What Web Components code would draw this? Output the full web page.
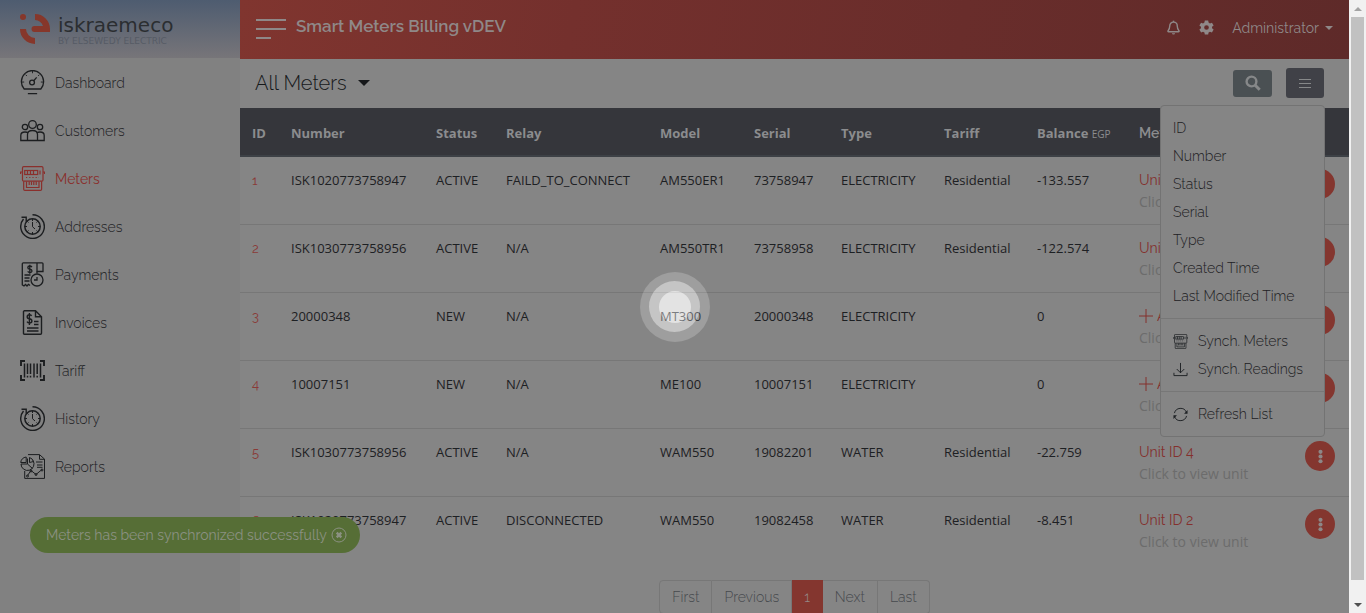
<!DOCTYPE html>
<html lang="en">
<head>
<meta charset="utf-8">
<title>Smart Meters Billing</title>
<style>
  html, body { margin: 0; height: 100%; }
  body {
    --display: Raleway, Lato, sans-serif;
    --data: "Segoe UI", "Open Sans", "Noto Sans", sans-serif;
    --red: #84362f;
    --page: #858585;
    --line: #777777;
    font: 300 14px/22px var(--display);
    color: #1d2023;
    background: var(--page);
    overflow: hidden;
  }
</style>
</head>
<body>
<billing-app>
  <side-nav slot="side">
    <nav-item icon="dashboard">Dashboard</nav-item>
    <nav-item icon="people">Customers</nav-item>
    <nav-item icon="meter" active>Meters</nav-item>
    <nav-item icon="clock">Addresses</nav-item>
    <nav-item icon="payment">Payments</nav-item>
    <nav-item icon="invoice">Invoices</nav-item>
    <nav-item icon="barcode">Tariff</nav-item>
    <nav-item icon="clock">History</nav-item>
    <nav-item icon="report">Reports</nav-item>
  </side-nav>
  <top-bar>Smart Meters Billing vDEV</top-bar>
  <list-toolbar>All Meters</list-toolbar>
  <meters-table></meters-table>
  <page-links></page-links>
  <scroll-track slot="track"></scroll-track>
  <toast-note slot="over">Meters has been synchronized successfully</toast-note>
  <busy-pulse slot="over"></busy-pulse>
</billing-app>

<script>
const ICONS = {
  dashboard: ['0 0 25 27', `<path d="M3.5 20.5a12 12 0 1 1 18 0zM7.5 25.5h10" stroke-width="1.4"/><circle cx="12" cy="13.5" r="2.6" stroke-width="1.4"/><path d="M13.8 11.6 17 8" stroke-width="1.4"/><path d="M12.5 1v2.5M5 5l1.500 1.500M20 5l-1.500 1.500M1 13h2.500M21.500 13H24" />`],
  people: ['0 0 25 25', `<g stroke-width="1.300"><circle cx="12.500" cy="6.500" r="3.800"/><circle cx="5" cy="9" r="2.700"/><circle cx="20" cy="9" r="2.700"/><path d="M7.500 22.500v-6q0-4 5-4t5 4v6zM7.500 22.500H.800v-5q0-3.500 4.200-3.500 2 0 3 .800M17.500 22.500h6.700v-5q0-3.500-4.200-3.500-2 0-3 .800"/></g>`],
  meter: ['0 0 25 25', `<g stroke-width="1.200"><rect x="2.500" y=".700" width="20.500" height="14.500" rx="1.200"/><path d="M2.500 6H.600v2M23 6h1.500v2M3.700 15.200v8q0 1.200 1.200 1.200h15.500q1.200 0 1.200-1.200v-8"/><rect x="4.700" y="4.500" width="13" height="4"/><path d="M7.500 4.500v4M10.500 4.500v4M13.500 4.500v4M20 4.500v4M6.500 15.500v6h12.500v-6M9.200 15.500v3.500M11.500 15.500v3.500M13.800 15.500v3.500M16.200 15.500v3.500"/><path d="M6 11.500h13" stroke-dasharray="1.200 2"/></g>`],
  clock: ['0 0 25 25', `<path d="M12.500.800A11.800 11.800 0 1 1 3.500 5" stroke-width="1.400"/><path d="M1.500 3.200h4.700v4.600" stroke-width="1.400"/><circle cx="12.500" cy="12.500" r="7.700" stroke-width="1.500"/><path d="M12.500 8v4.700l2.500 2.300M12.500 5v2M12.500 18v2M5 12.500h2M18 12.500h2M7.200 7.200l1.300 1.300M17.800 7.200l-1.300 1.300M7.200 17.800l1.300-1.300M17.800 17.800l-1.300-1.300"/>`],
  payment: ['0 0 25 25', `<g stroke-width="1.300"><path d="M10 23.500l-1.500-1.200L7 24l-1.500-1.500L4 24l-1.700-1.200V1.800q0-1 1-1H22q1 0 1 1V9.500h-6V1"/><path d="M17 9.500v2"/><circle cx="17" cy="18" r="6"/><path d="M17 15v3h-3M4.500 13h6M4.500 16h5M4.500 19h5"/><path d="M12 5q-1-1-2.200-1-2 0-2 1.500t2 1.700q2.200.300 2.200 1.800t-2 1.500q-1.500 0-2.300-1.200M9.800 2.800v9"/></g>`],
  invoice: ['0 0 25 25', `<g stroke-width="1.400"><path d="M4 .800h11.500l6 6v16.500q0 1-1 1H4.500q-1 0-1-1V1.800q0-1 1-1M15.500 1v5.800h6"/><path d="M11.700 5.800q-1-1-2.300-1-2.200 0-2.200 2t2.200 2q2.500.300 2.500 2.200t-2.400 2q-1.700 0-2.500-1.300M9.400 3v12M14 11.500h4.500M14 14.500h4.500M7 18h11.500M7 21h11.500"/></g>`],
  barcode: ['0 0 25 25', `<path d="M5 3H1v5M20 3h4v5M5 22H1v-5M20 22h4v-5" stroke-width="1.900"/><path d="M4.500 5.500v14M7.500 5.500v10.500M10.500 5.500v10.500M14 5.500v14M17.200 5.500v10.500M20.500 5.500v14M7.500 17.800v1.700M10.500 17.800v1.700M17.200 17.800v1.700" stroke-width="1.500"/>`],
  report: ['0 0 25 25', `<path d="M8 .600h11.500l5 4.500v19.300H4.700V17M19.500.800v4.500h5M16 8h6.500M17 11h5.500M17 13.300h5.500M7.500 21.500l3.500-5 5 4 6-5"/><path d="M7.500 4.500v5.500l5 4.500M7.500 10H1a6.500 6.500 0 1 0 12-3.500M.700 8.500a6.500 6.500 0 0 1 5.500-5.500v5.500zM9.500 3.500a6 6 0 0 1 4 4L9.500 8.500z"/><circle cx="7.500" cy="22" r="1"/><circle cx="11" cy="17" r="1"/><circle cx="16" cy="20.500" r="1"/><circle cx="22" cy="16" r="1"/>`],
  bell: ['0 0 16 16', `<path d="M8 2.300c-2.600 0-4 1.800-4 4.200 0 2.700-.700 3.700-1.800 4.900-.400.500-.100 1.100.500 1.100h10.600c.600 0 .900-.600.500-1.100C12.700 10.200 12 9.200 12 6.500c0-2.400-1.400-4.200-4-4.200z" stroke-width="1.500"/><path d="M8 .700v1.500" stroke-width="1.600"/><path d="M6.300 14h3.400a1.700 1.500 0 0 1-3.400 0z" fill="currentColor" stroke="none"/>`],
  gear: ['0 0 16 16', `<path fill="currentColor" stroke="none" fill-rule="evenodd" d="M6.200.500h3.600l.4 2.200 1.500.900 2.100-.8 1.800 3.100-1.700 1.400v1.400l1.700 1.400-1.800 3.100-2.100-.8-1.500.9-.4 2.200H6.200l-.4-2.200-1.500-.9-2.100.8L.400 10.100l1.700-1.400V7.300L.400 5.900l1.800-3.100 2.100.8 1.500-.9zM8 5.500a2.500 2.500 0 1 0 0 5 2.500 2.500 0 0 0 0-5z"/>`],
  search: ['0 0 16 16', `<circle cx="6.500" cy="6.500" r="4.900" stroke-width="2.400"/><path d="M10.200 10.200l4.500 4.500" stroke-width="3"/>`],
  lines: ['0 0 14 14', `<path d="M1 3.500h12M1 7.500h12M1 11.500h12" stroke-width="1.200"/>`],
  burger: ['0 0 30 22', `<path d="M0 3h30M0 12h30M0 21h15" stroke-width="2"/>`],
  download: ['0 0 16 16', `<path d="M8 1v10.500M4 7.500l4 4 4-4M1 11.500v3h14v-3"/>`],
  refresh: ['0 0 16 16', `<path d="M1.500 6.500A6.800 6.800 0 0 1 14.300 5.500M14.500 9.500A6.800 6.800 0 0 1 1.700 10.500"/><path d="M15.500 3.200v4H11.800zM.500 12.800v-4H4.200z" fill="currentColor" stroke="none"/>`],
  dots: ['0 0 16 16', `<g fill="currentColor" stroke="none"><circle cx="8" cy="3" r="2.200"/><circle cx="8" cy="8" r="2.200"/><circle cx="8" cy="13" r="2.200"/></g>`],
  plus: ['0 0 14 14', `<path d="M7 0v14M0 7h14"/>`],
  close: ['0 0 16 16', `<circle cx="8" cy="8" r="7"/><path d="M5.700 5.700l4.600 4.600M10.300 5.700l-4.600 4.600" stroke-width="2.400"/>`],
  logo: ['0 0 30 30', `<g fill="currentColor" stroke="none"><circle cx="3" cy="3" r="3"/><path d="M15 0a15 15 0 0 1 15 15v2.500q0 .5-.5.500H14.500a3 3 0 0 1 0-6h8.500A9 9 0 0 0 15 6zM0 15h6a9 9 0 0 0 9 9v6A15 15 0 0 1 0 15z"/></g>`]
};

/* Registers an element whose shadow root holds the given styles and markup. */
function component(name, css, markup) {
  customElements.define(name, class extends HTMLElement {
    constructor() {
      super();
      this.attachShadow({ mode: 'open' });
    }
    connectedCallback() {
      const html = typeof markup === 'function' ? markup(this) : markup;
      this.shadowRoot.innerHTML =
        `<style>*{box-sizing:border-box}button,a{font:inherit;color:inherit;text-decoration:none}${css}</style>${html}`;
    }
  });
}

component('ui-icon', `
  :host { display: inline-flex; flex: none; width: 16px; height: 16px; }
  svg { width: 100%; height: 100%; display: block; }
`, el => {
  const [box, body] = ICONS[el.getAttribute('name')];
  return `<svg viewBox="${box}" fill="none" stroke="currentColor" stroke-width="1" aria-hidden="true">${body}</svg>`;
});

component('billing-app', `
  :host { display: flex; height: 100vh; overflow: hidden; }
  main { flex: 1; min-width: 0; overflow: hidden; }
`, `<slot name="side"></slot><main><slot></slot></main><slot name="track"></slot><slot name="over"></slot>`);

component('side-nav', `
  :host { display: block; flex: none; width: 240px; background: #818181; }
  .brand { display: flex; gap: 8px; height: 59px; padding: 14px 20px 0;
    background: linear-gradient(#4e5c70, #777579); border-bottom: 1px solid #818181; }
  .mark { width: 30px; height: 30px; color: #86372b; }
  .name { font: 400 20px/22px "DejaVu Sans", sans-serif; color: #2b2e31; }
  .sub { font: 400 9px/10px "DejaVu Sans", sans-serif; color: #565b65; white-space: nowrap; }
`, `<a class="brand" href="#"><ui-icon class="mark" name="logo"></ui-icon>
  <div><div class="name">iskraemeco</div><div class="sub">BY ELSEWEDY ELECTRIC</div></div></a>
  <nav><slot></slot></nav>`);

component('nav-item', `
  :host { display: block; }
  a { display: flex; align-items: center; gap: 10px; height: 48px; padding: 0 20px; }
  ui-icon { width: 25px; height: 25px; margin-bottom: 2px; color: #1c1e20; }
  :host([active]) a { color: #8a2f2c; font-weight: 400; }
  :host([active]) ui-icon { color: #8a2f2c; }
`, el => `<a href="#"><ui-icon name="${el.getAttribute('icon')}"></ui-icon><slot></slot></a>`);

component('top-bar', `
  :host { display: flex; align-items: center; height: 59px; padding: 0 16px; color: #8f8888;
    background: linear-gradient(100deg, #80352f, #74302d 30%, #5e2a29); }
  h1 { flex: 1; margin: 0; padding: 0 0 8px 10px; font-size: 17px; line-height: 24px; font-weight: 600; }
  button { display: flex; align-items: center; padding: 0; border: 0; background: none; }
  .burger { padding-bottom: 4px; }
  .burger ui-icon { width: 30px; height: 22px; }
  .tools { display: flex; align-items: center; gap: 18px; padding-bottom: 4px; font-weight: 400; }
  .tools ui-icon { width: 15px; height: 15px; }
  .user { gap: 6px; }
  .user::after { content: ""; border: 4px solid transparent; border-top-color: currentColor; border-bottom: 0; }
`, `<button class="burger" aria-label="Toggle menu"><ui-icon name="burger"></ui-icon></button>
  <h1><slot></slot></h1>
  <div class="tools">
    <button aria-label="Notifications"><ui-icon name="bell"></ui-icon></button>
    <button aria-label="Settings"><ui-icon name="gear"></ui-icon></button>
    <button class="user">Administrator</button>
  </div>`);

component('list-toolbar', `
  :host { display: flex; align-items: center; gap: 14px; height: 48px; padding: 0 25px 0 15px; border-bottom: 1px solid var(--page); }
  button { border: 0; }
  .view { display: flex; align-items: center; gap: 11px; margin-right: auto; padding: 0; background: none;
    font-size: 20px; line-height: 28px; color: #16181a; }
  .view::after { content: ""; border: 6px solid transparent; border-top-color: currentColor; border-bottom: 0; }
  .tool { display: flex; align-items: center; justify-content: center; border-radius: 3px; color: #868889; }
  .search { width: 39px; height: 27px; background: #4a5053; }
  .more { width: 38px; height: 30px; background: #404147; }
  .more ui-icon { width: 14px; height: 14px; }
  .anchor { position: relative; }
  list-menu { position: absolute; z-index: 2; top: 37px; right: -1px; }
`, `<button class="view"><slot></slot></button>
  <button class="tool search" aria-label="Search"><ui-icon name="search"></ui-icon></button>
  <div class="anchor">
    <button class="tool more" aria-label="List options"><ui-icon name="lines"></ui-icon></button>
    <list-menu></list-menu>
  </div>`);

component('list-menu', `
  :host { display: block; width: 165px; padding: 8px 0; background: #858585; border: 1px solid #737373; border-radius: 4px; }
  a { display: flex; align-items: center; gap: 10px; height: 28px; padding: 0 12px; white-space: nowrap; }
  hr { margin: 8px 0; border: 0; border-top: 1px solid #777777; }
  ui-icon { width: 15px; height: 15px; }
`, `${['ID', 'Number', 'Status', 'Serial', 'Type', 'Created Time', 'Last Modified Time'].map(t => `<a href="#">${t}</a>`).join('')}
  <hr><a href="#"><ui-icon name="meter"></ui-icon>Synch. Meters</a>
  <a href="#"><ui-icon name="download"></ui-icon>Synch. Readings</a>
  <hr><a href="#"><ui-icon name="refresh"></ui-icon>Refresh List</a>`);

const COLUMNS = [['ID', 39], ['Number', 145], ['Status', 70], ['Relay', 154], ['Model', 94], ['Serial', 87],
  ['Type', 103], ['Tariff', 93], ['Balance <small>EGP</small>', 102], ['<span class="alt">Meter</span>', 166], ['', 56]];
const METERS = [
  ['1', 'ISK1020773758947', 'ACTIVE', 'FAILD_TO_CONNECT', 'AM550ER1', '73758947', 'ELECTRICITY', 'Residential', '-133.557', 'Unit ID 1'],
  ['2', 'ISK1030773758956', 'ACTIVE', 'N/A', 'AM550TR1', '73758958', 'ELECTRICITY', 'Residential', '-122.574', 'Unit ID 3'],
  ['3', '20000348', 'NEW', 'N/A', 'MT300', '20000348', 'ELECTRICITY', '', '0', ''],
  ['4', '10007151', 'NEW', 'N/A', 'ME100', '10007151', 'ELECTRICITY', '', '0', ''],
  ['5', 'ISK1030773758956', 'ACTIVE', 'N/A', 'WAM550', '19082201', 'WATER', 'Residential', '-22.759', 'Unit ID 4'],
  ['6', 'ISK1020773758947', 'ACTIVE', 'DISCONNECTED', 'WAM550', '19082458', 'WATER', 'Residential', '-8.451', 'Unit ID 2']
];

component('meters-table', `
  :host { display: block; font: 400 13px/22px var(--data); }
  table { width: 100%; table-layout: fixed; border-collapse: separate; border-spacing: 0; }
  th { height: 49px; padding: 2px 12px 0; text-align: left; font-weight: 700; color: #8b8c8e; background: #35363b;
    border-bottom: 2px solid #3d4146; white-space: nowrap; }
  th small { font-size: 10px; line-height: 12px; font-weight: 400; }
  .alt { font: 600 14px/22px var(--display); }
  td { height: 68px; padding: 12px 12px 11px; vertical-align: top; white-space: nowrap; border-bottom: 1px solid var(--line); }
  tr:last-child td { border-bottom-color: transparent; }
  .id { font: 400 13px/22px var(--display); color: #8a3a37; }
  .unit { display: flex; align-items: center; gap: 4px; font: 400 14px/22px var(--display); color: #84302d; }
  .unit ui-icon { width: 14px; height: 14px; }
  .hint { font-size: 14px; color: #6c6c6c; }
  td:last-child { padding-right: 0; }
  button { display: flex; align-items: center; justify-content: center; width: 30px; height: 30px; padding: 0;
    border: 0; border-radius: 50%; background: var(--red); color: #8d8787; }
  button ui-icon { width: 15px; height: 15px; }
`, `<table>
  <colgroup>${COLUMNS.map(c => `<col style="width:${c[1]}px">`).join('')}</colgroup>
  <thead><tr>${COLUMNS.map(c => `<th scope="col">${c[0]}</th>`).join('')}</tr></thead>
  <tbody>${METERS.map(([id, ...m]) => {
    const unit = m.pop();
    return `<tr><td><a class="id" href="#">${id}</a></td>${m.map(v => `<td>${v}</td>`).join('')}
      <td><a class="unit" href="#">${unit || '<ui-icon name="plus"></ui-icon>Add'}</a>
      <div class="hint">${unit ? 'Click to view unit' : 'Click to add unit'}</div></td>
      <td><button aria-label="Meter actions"><ui-icon name="dots"></ui-icon></button></td></tr>`;
  }).join('')}</tbody></table>`);

component('page-links', `
  :host { display: flex; justify-content: center; margin-top: 15px; color: #45494d; }
  nav { display: flex; }
  a { height: 34px; padding: 5px 12px; border: 1px solid var(--line); border-left-width: 0; }
  a:first-child { border-left-width: 1px; border-radius: 4px 0 0 4px; }
  a:last-child { border-radius: 0 4px 4px 0; }
  a[aria-current] { background: var(--red); border-color: var(--red); color: #958a89; }
`, `<nav aria-label="Pages"><a href="#">First</a><a href="#">Previous</a><a href="#" aria-current="page">1</a><a href="#">Next</a><a href="#">Last</a></nav>`);

component('toast-note', `
  :host { position: fixed; z-index: 3; left: 30px; bottom: 60px; display: flex; align-items: center; gap: 4px;
    height: 36px; padding: 0 13px 0 16px; border-radius: 18px; background: #566e36; color: #8b9182; font-weight: 400; }
  button { display: flex; padding: 0; border: 0; background: none; }
`, `<span role="status"><slot></slot></span><button aria-label="Dismiss"><ui-icon name="close"></ui-icon></button>`);

/* Light is added on top of the page, so the row text stays readable inside the rings. */
component('busy-pulse', `
  :host { position: fixed; inset: 0 17px 0 0; z-index: 4; display: grid; place-items: center; pointer-events: none;
    mix-blend-mode: plus-lighter; }
  div { display: grid; place-items: center; border-radius: 50%; }
  .outer { width: 70px; height: 70px; background: #191919; }
  .mid { width: 51px; height: 51px; background: #404040; }
  .core { width: 32px; height: 32px; background: #5e5e5e; }
`, `<div class="outer"><div class="mid"><div class="core"></div></div></div>`);

component('scroll-track', `
  :host { display: flex; flex-direction: column; align-items: center; flex: none; width: 17px; background: #f1f1f1; }
  .cap { display: grid; place-items: center; height: 17px; }
  .cap::before { content: ""; border: 4px solid transparent; }
  .up::before { border-bottom-color: #a3a3a3; border-top: 0; }
  .down::before { border-top-color: #505050; border-bottom: 0; }
  .bar { flex: 1; width: 13px; margin-bottom: 16px; background: #c1c1c1; }
`, `<div class="cap up"></div><div class="bar"></div><div class="cap down"></div>`);
</script>
</body>
</html>
